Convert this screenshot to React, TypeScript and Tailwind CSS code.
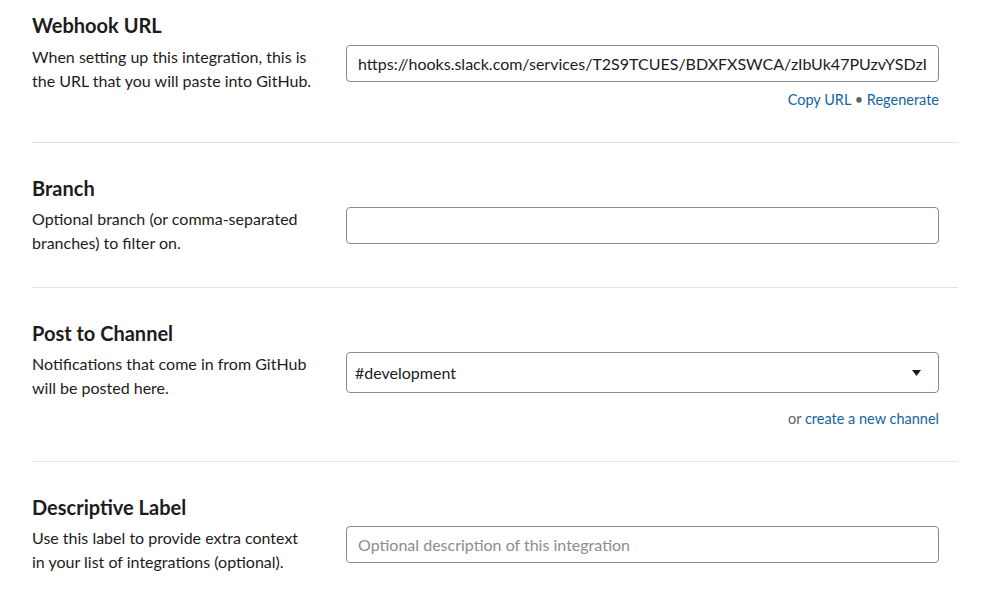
const font = { fontFamily: "Lato, 'Noto Sans', sans-serif" };

function Section({
  title,
  desc,
  children,
  first,
  last,
}: {
  title: string;
  desc: string[];
  children: React.ReactNode;
  first?: boolean;
  last?: boolean;
}) {
  return (
    <div className={`${first ? "pt-[11px]" : "pt-[31px]"} pb-[32px] ${last ? "" : "border-b border-[#e3e3e3]"}`}>
      <h2 className={`text-[20px] leading-[28px] font-bold text-[#1d1c1d] ${first ? "mb-[6px]" : "mb-[5px]"}`}>{title}</h2>
      <div className="grid grid-cols-[280px_minmax(0,1fr)] gap-x-[34px] pr-[19px]">
        <p className="text-[16px] leading-[24px] text-[#1d1c1d]">
          {desc.map((l, i) => (
            <span key={i} className="block whitespace-nowrap">
              {l}
            </span>
          ))}
        </p>
        <div className="min-w-0">{children}</div>
      </div>
    </div>
  );
}

export default function App() {
  return (
    <div className="bg-white min-h-[598px] pl-[32px] pr-[28px]" style={font}>
      <Section
        first
        title="Webhook URL"
        desc={["When setting up this integration, this is", "the URL that you will paste into GitHub."]}
      >
        <div className="h-[37px] border border-[#8a8a8a] rounded-[4px] px-[11px] flex items-center overflow-hidden whitespace-nowrap text-[16px] text-[#1d1c1d]">
          https://hooks.slack.com/services/T2S9TCUES/BDXFXSWCA/zIbUk47PUzvYSDzI
        </div>
        <div className="mt-[8px] text-right text-[14.5px] leading-[20px] text-[#616061]">
          <span className="text-[#1264a3]">Copy URL</span> • <span className="text-[#1264a3]">Regenerate</span>
        </div>
      </Section>
      <Section title="Branch" desc={["Optional branch (or comma-separated", "branches) to filter on."]}>
        <div className="h-[37px] border border-[#8a8a8a] rounded-[4px]" />
      </Section>
      <Section title="Post to Channel" desc={["Notifications that come in from GitHub", "will be posted here."]}>
        <div className="h-[41px] border border-[#8a8a8a] rounded-[4px] pl-[8px] pr-[17px] flex items-center justify-between text-[16px] text-[#1d1c1d]">
          <span>#development</span>
          <svg width="9" height="6" viewBox="0 0 9 6">
            <path d="M0 0 H9 L4.5 6 Z" fill="#1d1c1d" />
          </svg>
        </div>
        <div className="mt-[16px] text-right text-[14.5px] leading-[20px] text-[#616061]">
          or <span className="text-[#1264a3]">create a new channel</span>
        </div>
      </Section>
      <Section
        last
        title="Descriptive Label"
        desc={["Use this label to provide extra context", "in your list of integrations (optional)."]}
      >
        <div className="h-[37px] border border-[#8a8a8a] rounded-[4px] px-[11px] flex items-center text-[16px] text-[#8d8c8d]">
          Optional description of this integration
        </div>
      </Section>
    </div>
  );
}
